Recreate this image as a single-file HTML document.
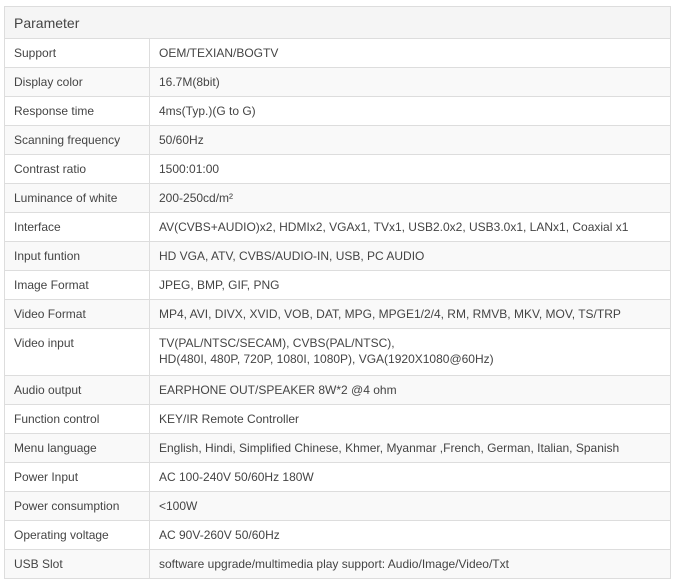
<!DOCTYPE html>
<html><head><style>
body{margin:0;background:#fff;font-family:"Liberation Sans",Arial,sans-serif;color:#444;}
table{position:absolute;left:4px;top:6px;width:667px;border-collapse:collapse;font-size:12px;}
td,th{border:1px solid #ddd;padding:0 0 0 9px;text-align:left;height:28px;line-height:16px;vertical-align:middle;}
th{font-weight:normal;font-size:14px;background:#f5f5f5;height:31px;color:#444;}
tr:nth-child(odd) td{background:#f9f9f9;}
td:first-child{width:135px;}
td.t{vertical-align:top;padding-top:6px;height:40px;}
</style></head><body>
<table>
<tr><th colspan="2">Parameter</th></tr>
<tr><td>Support</td><td>OEM/TEXIAN/BOGTV</td></tr>
<tr><td>Display color</td><td>16.7M(8bit)</td></tr>
<tr><td>Response time</td><td>4ms(Typ.)(G to G)</td></tr>
<tr><td>Scanning frequency</td><td>50/60Hz</td></tr>
<tr><td>Contrast ratio</td><td>1500:01:00</td></tr>
<tr><td>Luminance of white</td><td>200-250cd/m²</td></tr>
<tr><td>Interface</td><td>AV(CVBS+AUDIO)x2, HDMIx2, VGAx1, TVx1, USB2.0x2, USB3.0x1, LANx1, Coaxial x1</td></tr>
<tr><td>Input funtion</td><td>HD VGA, ATV, CVBS/AUDIO-IN, USB, PC AUDIO</td></tr>
<tr><td>Image Format</td><td>JPEG, BMP, GIF, PNG</td></tr>
<tr><td>Video Format</td><td>MP4, AVI, DIVX, XVID, VOB, DAT, MPG, MPGE1/2/4, RM, RMVB, MKV, MOV, TS/TRP</td></tr>
<tr><td class="t">Video input</td><td class="t">TV(PAL/NTSC/SECAM), CVBS(PAL/NTSC),<br>HD(480I, 480P, 720P, 1080I, 1080P), VGA(1920X1080@60Hz)</td></tr>
<tr><td>Audio output</td><td>EARPHONE OUT/SPEAKER 8W*2 @4 ohm</td></tr>
<tr><td>Function control</td><td>KEY/IR Remote Controller</td></tr>
<tr><td>Menu language</td><td>English, Hindi, Simplified Chinese, Khmer, Myanmar ,French, German, Italian, Spanish</td></tr>
<tr><td>Power Input</td><td>AC 100-240V 50/60Hz 180W</td></tr>
<tr><td>Power consumption</td><td>&lt;100W</td></tr>
<tr><td>Operating voltage</td><td>AC 90V-260V 50/60Hz</td></tr>
<tr><td>USB Slot</td><td>software upgrade/multimedia play support: Audio/Image/Video/Txt</td></tr>
</table>
</body></html>
